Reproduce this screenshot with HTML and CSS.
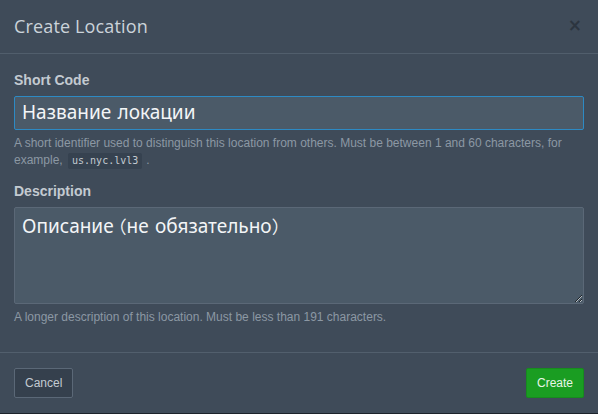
FILE: index.html
```html
<!DOCTYPE html>
<html>
<head>
<meta charset="utf-8">
<link rel="stylesheet" href="styles.css">
</head>
<body>
<div class="modal">
  <div class="modal-header">
    <h1 class="modal-title">Create Location</h1>
    <span class="close">×</span>
  </div>
  <div class="modal-body">
    <div class="field">
      <label class="label">Short Code</label>
      <input class="input focused" type="text" placeholder="Название локации">
      <p class="help">A short identifier used to distinguish this location from others. Must be between 1 and 60 characters, for example, <code class="code">us.nyc.lvl3</code>.</p>
    </div>
    <div class="field">
      <label class="label">Description</label>
      <textarea class="textarea" placeholder="Описание (не обязательно)"></textarea>
      <p class="help">A longer description of this location. Must be less than 191 characters.</p>
    </div>
  </div>
  <div class="modal-footer">
    <button class="btn btn-secondary">Cancel</button>
    <button class="btn btn-primary">Create</button>
  </div>
</div>
</body>
</html>
```
FILE: styles.css
```css
html, body {
  margin: 0;
  padding: 0;
  background: #3f4b59;
  height: 100%;
}
body {
  font-family: "Liberation Sans", Arial, sans-serif;
  border-bottom: 1px solid #1c232b;
  box-sizing: border-box;
}
.modal {
  display: flex;
  flex-direction: column;
  height: 413px;
  background: #3f4b59;
}
.modal-header {
  display: flex;
  align-items: center;
  justify-content: space-between;
  height: 53px;
  padding: 0 14px;
  border-bottom: 1px solid #515e6c;
}
.modal-title {
  margin: -1px 0 0;
  font-family: "Open Sans", "Noto Sans", sans-serif;
  font-weight: 400;
  font-size: 18px;
  color: #cbd3da;
  letter-spacing: 0.15px;
}
.close {
  font-family: "DejaVu Sans", sans-serif;
  font-size: 17px;
  font-weight: bold;
  color: #2c3540;
  margin-right: 2px;
  margin-top: -3px;
}
.modal-body {
  padding: 18px 14px 0;
  flex: 1;
}
.field {
  display: flex;
  flex-direction: column;
  margin-bottom: 14px;
}
.label {
  font-size: 14px;
  font-weight: bold;
  color: #c3cad1;
  margin-bottom: 7px;
  line-height: 17px;
}
.input, .textarea {
  box-sizing: border-box;
  width: 100%;
  background: #4b5a68;
  border: 1px solid #5b6877;
  border-radius: 2px;
  color: #f0f2f4;
  font-family: "Comic Neue", "Comic Sans MS", "Noto Sans", sans-serif;
  font-size: 19px;
  padding: 0 7px;
  outline: none;
}
.input {
  height: 34px;
}
.input.focused {
  border-color: #2d8ac4;
}
.textarea {
  height: 97px;
  padding-top: 5px;
  resize: vertical;
  display: block;
}
.input::placeholder, .textarea::placeholder {
  color: #f3f5f7;
  opacity: 1;
}
.help {
  margin: 5px 0 0;
  font-size: 12px;
  line-height: 17px;
  color: #8c98a4;
}
.code {
  display: inline-block;
  font-family: "DejaVu Sans Mono", "Liberation Mono", monospace;
  font-size: 10px;
  line-height: 16px;
  height: 16px;
  color: #c3cad1;
  background: #364250;
  border-radius: 2px;
  padding: 0 4px;
  margin: 0 4px 0 2px;
  vertical-align: middle;
}
.modal-footer {
  display: flex;
  justify-content: space-between;
  align-items: center;
  border-top: 1px solid #525f6d;
  padding: 15px 14px 15px;
}
.btn {
  font-family: "Liberation Sans", Arial, sans-serif;
  font-size: 12px;
  height: 30px;
  padding: 0 10px;
  border-radius: 2px;
  cursor: pointer;
}
.btn-secondary {
  background: #35404d;
  border: 1px solid #5b6877;
  color: #c3cad1;
}
.btn-primary {
  background: #1a9d22;
  border: 1px solid #178b1e;
  color: #e8f5e8;
}
```
